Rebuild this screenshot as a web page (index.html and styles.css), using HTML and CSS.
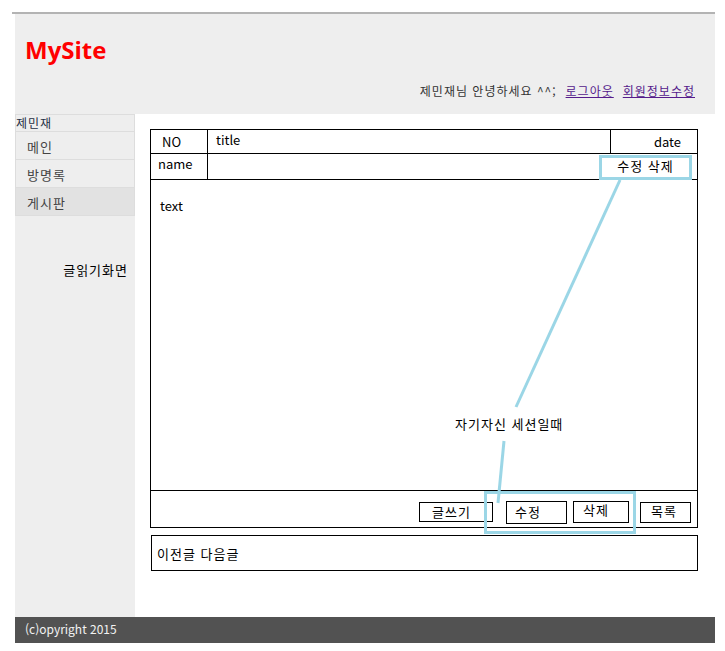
FILE: index.html
```html
<!DOCTYPE html>
<html lang="ko">
<head>
<meta charset="utf-8">
<title>MySite - 글읽기화면</title>
<link rel="stylesheet" href="styles.css">
</head>
<body>
<div class="topline"></div>
<div class="wrap">
  <header class="header">
    <h1 class="logo">MySite</h1>
    <div class="greet">제민재님 안녕하세요 ^^;<a href="#logout" class="link">로그아웃</a><a href="#member" class="link">회원정보수정</a></div>
  </header>
  <div class="content">
    <aside class="side">
      <div class="menu-box">
        <div class="user">제민재</div>
        <ul class="menu">
          <li class="menu-item">메인</li>
          <li class="menu-item">방명록</li>
          <li class="menu-item active">게시판</li>
        </ul>
      </div>
      <p class="page-name">글읽기화면</p>
    </aside>
    <main class="main">
      <div class="post">
        <div class="row r1">
          <div class="c-no">NO</div>
          <div class="c-title">title</div>
          <div class="c-date">date</div>
        </div>
        <div class="row r2">
          <div class="c-name">name</div>
          <div class="c-rest"></div>
        </div>
        <div class="text">text</div>
        <div class="actions">
          <span class="btn btn-write">글쓰기</span>
          <span class="btn btn-edit">수정</span>
          <span class="btn btn-del">삭제</span>
          <span class="btn btn-list">목록</span>
        </div>
      </div>
      <div class="nav">이전글 다음글</div>

      <div class="edit-box">수정 삭제</div>
      <div class="hl-box"></div>
      <svg class="callout" width="580" height="503" viewBox="0 0 580 503">
        <line x1="485" y1="66" x2="381" y2="293" />
        <line x1="369" y1="327" x2="363" y2="389" />
      </svg>
      <span class="note">자기자신 세션일때</span>
    </main>
  </div>
  <footer class="footer">(c)opyright 2015</footer>
</div>
</body>
</html>
```
FILE: styles.css
```css
* { box-sizing: border-box; }
html, body { margin: 0; padding: 0; background: #fff; }
body {
  font-family: "Noto Sans CJK KR", "Noto Sans", sans-serif;
  font-size: 13px;
  color: #000;
}

.topline { margin: 12px 0 0 12px; width: 703px; height: 2px; background: #b3b3b3; }
.wrap { margin-left: 15px; width: 700px; }

/* header */
.header { height: 100px; background: #eee; padding-top: 20px; }
.logo {
  margin: 0;
  padding-left: 10px;
  font-family: "Open Sans", sans-serif;
  font-weight: 700;
  font-size: 24px;
  line-height: 32px;
  color: #ff0000;
}
.greet {
  margin-top: 17px;
  padding-right: 20px;
  text-align: right;
  font-size: 12px;
  line-height: 16px;
  color: #333;
  letter-spacing: 1px;
}
.link { color: #551a8b; margin-left: 9px; text-decoration: underline; }

/* body */
.content { display: flex; height: 503px; }
.side { width: 120px; background: #eee; }
.menu-box { border: 1px solid #ddd; border-bottom: 0; }
.user {
  font-size: 12px;
  line-height: 16px;
  color: #1f2f44;
  letter-spacing: 1px;
  border-bottom: 1px solid #ddd;
}
.menu { margin: 0; padding: 0; list-style: none; }
.menu-item {
  height: 28px;
  padding: 2px 0 0 11px;
  line-height: 25px;
  font-size: 13px;
  color: #444;
  letter-spacing: 1px;
  border-bottom: 1px solid #ddd;
}
.menu-item.active { background: #e2e2e2; }
.page-name {
  margin: 45px 0 0;
  padding-right: 7px;
  text-align: right;
  line-height: 18px;
  letter-spacing: 1px;
}

/* main */
.main { flex: 1; position: relative; padding: 15px 0 0 15px; background: #fff; }
.post { width: 548px; border: 1px solid #000; }
.row { display: flex; border-bottom: 1px solid #000; line-height: 18px; }
.r1 { height: 24px; }
.r2 { height: 26px; }
.c-no { width: 57px; border-right: 1px solid #000; padding: 3px 0 0 11px; }
.c-title { flex: 1; border-right: 1px solid #000; padding: 1px 0 0 8px; }
.c-date { width: 86px; text-align: right; padding: 3px 16px 0 0; }
.c-name { width: 57px; border-right: 1px solid #000; padding: 1px 0 0 7px; }
.c-rest { flex: 1; }
.text { height: 311px; border-bottom: 1px solid #000; padding: 17px 0 0 9px; line-height: 18px; }

.actions {
  height: 36px;
  display: flex;
  justify-content: flex-end;
  align-items: flex-start;
  padding: 10px 6px 0 0;
}
.btn { display: block; border: 1px solid #000; background: #fff; font-size: 13px; letter-spacing: 1px; }
.btn-write { width: 74px; height: 20px; margin: 1px 13px 0 0; padding-left: 12px; line-height: 17px; }
.btn-edit { width: 61px; height: 23px; margin-right: 6px; padding-left: 8px; line-height: 20px; }
.btn-del { width: 56px; height: 22px; margin-right: 11px; padding-left: 9px; line-height: 16px; }
.btn-list { width: 51px; height: 21px; margin-top: 1px; padding-left: 10px; line-height: 16px; }

.nav {
  margin: 7px 0 0 1px;
  width: 547px;
  height: 36px;
  border: 1px solid #000;
  padding: 1px 0 0 5px;
  line-height: 33px;
  letter-spacing: 1px;
}

/* annotations */
.edit-box {
  position: absolute;
  left: 464px;
  top: 41px;
  width: 93px;
  height: 25px;
  border: 3px solid #9bd6e6;
  text-align: center;
  line-height: 15px;
  letter-spacing: 1px;
}
.hl-box {
  position: absolute;
  left: 349px;
  top: 377px;
  width: 152px;
  height: 43px;
  border: 3px solid #9bd6e6;
}
.callout { position: absolute; left: 0; top: 0; pointer-events: none; }
.callout line { stroke: #9bd6e6; stroke-width: 3; }
.note { position: absolute; left: 320px; top: 301px; line-height: 18px; white-space: nowrap; letter-spacing: 1px; }

/* footer */
.footer {
  height: 26px;
  background: #525252;
  color: #f2f2f2;
  padding-left: 10px;
  line-height: 24px;
  font-size: 12px;
}
```
